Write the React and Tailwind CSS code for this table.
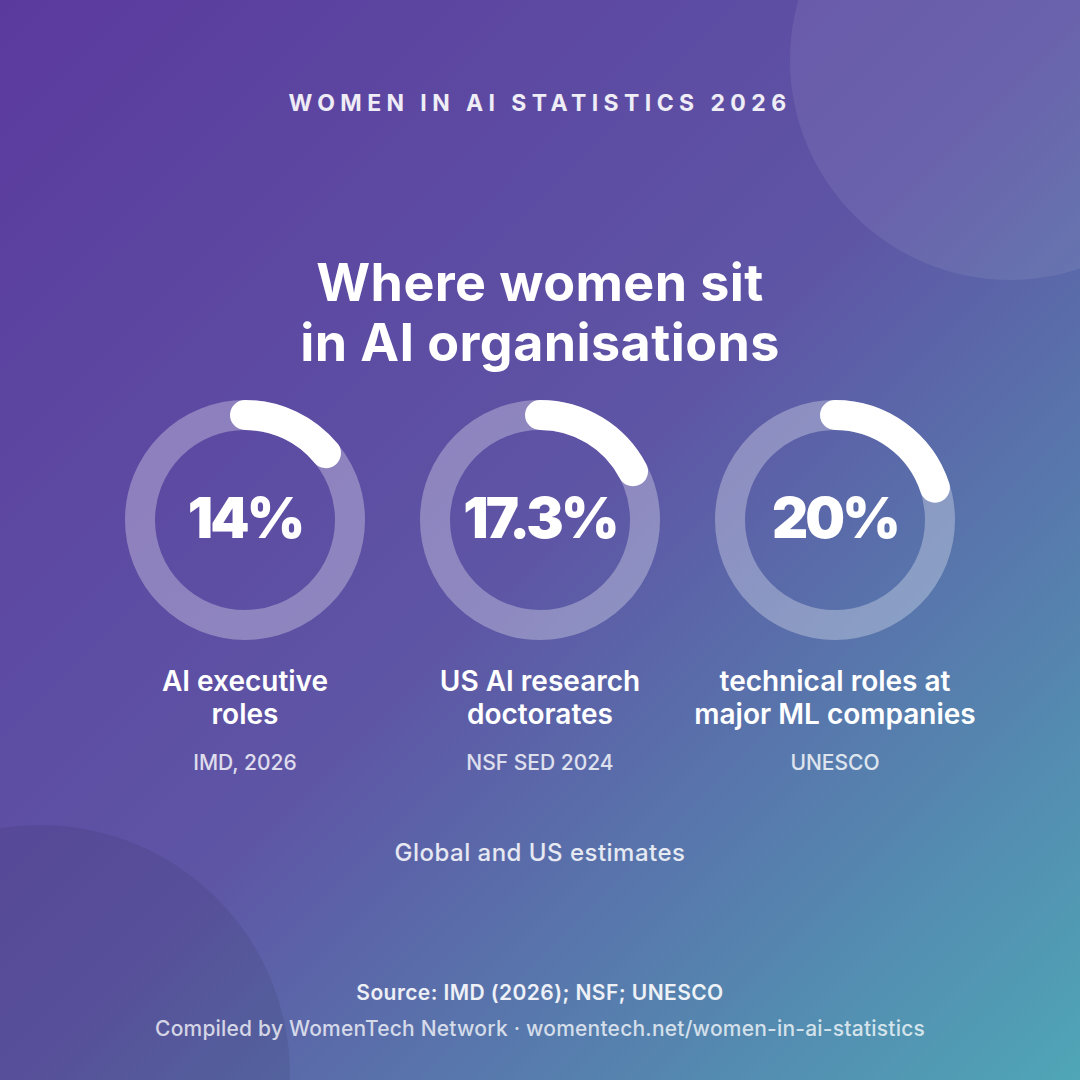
import React from "react";

const stats = [
  { value: "14%", pct: 14, label: ["AI executive", "roles"], src: "IMD, 2026" },
  { value: "17.3%", pct: 17.3, label: ["US AI research", "doctorates"], src: "NSF SED 2024" },
  { value: "20%", pct: 20, label: ["technical roles at", "major ML companies"], src: "UNESCO" },
];

function Ring({ pct, value }) {
  const r = 105;
  const c = 2 * Math.PI * r;
  return (
    <div className="relative w-[240px] h-[240px]">
      <svg width="240" height="240" viewBox="0 0 240 240" className="-rotate-90">
        <circle cx="120" cy="120" r={r} fill="none" stroke="rgba(255,255,255,0.3)" strokeWidth="30" />
        <circle
          cx="120"
          cy="120"
          r={r}
          fill="none"
          stroke="#ffffff"
          strokeWidth="30"
          strokeLinecap="round"
          strokeDasharray={`${(pct / 100) * c} ${c}`}
        />
      </svg>
      <div className="absolute inset-0 flex items-center justify-center pb-[4px] text-white text-[56px] font-black tracking-[-0.05em] leading-none">
        {value}
      </div>
    </div>
  );
}

export default function App() {
  return (
    <div
      className="relative w-[1080px] h-[1080px] overflow-hidden bg-[linear-gradient(135deg,#5b3a9e_0%,#5e55a5_50%,#4fa6b6_100%)] text-white"
      style={{ fontFamily: "Inter, 'Noto Sans', sans-serif" }}
    >
      <div className="absolute left-[790px] top-[-160px] w-[440px] h-[440px] rounded-full bg-white/[0.08]" />
      <div className="absolute left-[-210px] top-[825px] w-[500px] h-[500px] rounded-full bg-black/[0.07]" />

      <div className="relative flex flex-col items-center">
        <div className="mt-[88px] text-[23px] leading-[30px] font-bold tracking-[0.235em] text-white/90">
          WOMEN IN AI STATISTICS 2026
        </div>
        <h1 className="mt-[135px] text-[52px] leading-[60px] font-bold text-center tracking-[0.008em]">
          Where women sit
          <br />
          in AI organisations
        </h1>
        <div className="mt-[27px] grid grid-cols-3 w-[885px]">
          {stats.map((s) => (
            <div key={s.value} className="flex flex-col items-center">
              <Ring pct={s.pct} value={s.value} />
              <div className="mt-[25px] text-[28px] leading-[33px] font-semibold text-center">
                {s.label[0]}
                <br />
                {s.label[1]}
              </div>
              <div className="mt-[18px] text-[21px] leading-[28px] font-medium text-white/80">{s.src}</div>
            </div>
          ))}
        </div>
        <div className="mt-[61px] text-[24px] leading-[30px] font-medium tracking-[0.02em] text-white/85">
          Global and US estimates
        </div>
        <div className="mt-[111px] text-[21px] leading-[28px] font-semibold tracking-[0.02em] text-white/90">
          Source: IMD (2026); NSF; UNESCO
        </div>
        <div className="mt-[9px] text-[21px] leading-[26px] font-medium tracking-[0.01em] text-white/75">
          Compiled by WomenTech Network · womentech.net/women-in-ai-statistics
        </div>
      </div>
    </div>
  );
}
